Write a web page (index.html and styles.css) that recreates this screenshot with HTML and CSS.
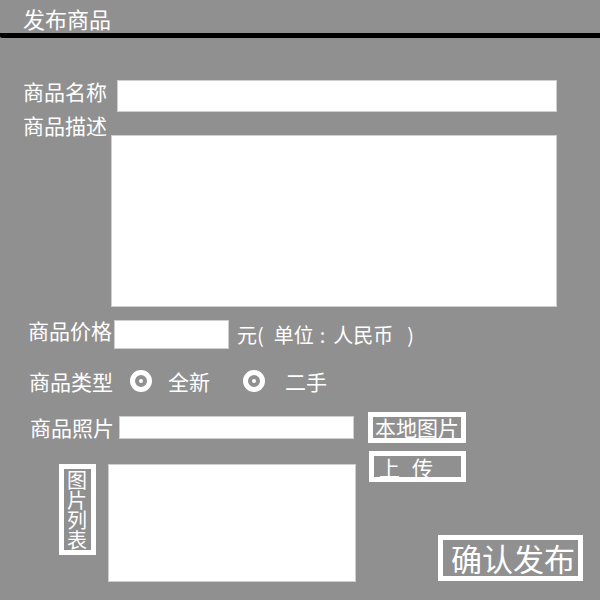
FILE: index.html
```html
<!DOCTYPE html>
<html lang="zh">
<head>
<meta charset="utf-8">
<title>发布商品</title>
<link rel="stylesheet" href="styles.css">
</head>
<body>
<div class="page">
  <div class="header"><span class="title">发布商品</span></div>

  <div class="row row-name">
    <span class="label">商品名称</span>
    <div class="input input-name"></div>
  </div>

  <div class="row row-desc">
    <span class="label">商品描述</span>
    <div class="input textarea"></div>
  </div>

  <div class="row row-price">
    <span class="label">商品价格</span>
    <div class="input input-price"></div>
    <span class="unit"><span>元(</span><span class="u-unit">单位</span><span class="u-colon">:</span><span class="u-rmb">人民币</span><span class="u-close">)</span></span>
  </div>

  <div class="row row-type">
    <span class="label">商品类型</span>
    <span class="radio radio-first"><span class="dot"></span></span>
    <span class="radio-text">全新</span>
    <span class="radio radio-second"><span class="dot"></span></span>
    <span class="radio-text radio-text-second">二手</span>
  </div>

  <div class="row row-photo">
    <span class="label">商品照片</span>
    <div class="input input-photo"></div>
    <div class="btn btn-local">本地图片</div>
  </div>

  <div class="bottom">
    <div class="list-label">图片列表</div>
    <div class="input list-box"></div>
    <div class="actions">
      <div class="btn btn-upload"><span class="up-first">上</span>传</div>
      <div class="btn btn-confirm">确认发布</div>
    </div>
  </div>
</div>
</body>
</html>
```

FILE: styles.css
```css
html, body {
  margin: 0;
  padding: 0;
  background: #909090;
}

body {
  width: 600px;
  height: 600px;
  overflow: hidden;
  font-family: "Noto Sans CJK SC", "Noto Sans", sans-serif;
  color: #ffffff;
}

.page {
  display: flex;
  flex-direction: column;
}

.header {
  height: 33px;
  border-bottom: 5px solid #000000;
  border-bottom-left-radius: 2px;
  padding-left: 23px;
  box-sizing: content-box;
}

.title {
  display: block;
  font-size: 22px;
  line-height: 22px;
  padding-top: 7px;
}

.row {
  display: flex;
  align-items: flex-start;
}

.label {
  font-size: 21px;
  line-height: 21px;
  white-space: nowrap;
}

.input {
  background: #ffffff;
  border: 1px solid #cfcfcf;
  box-sizing: border-box;
}

/* row: name */
.row-name {
  margin-top: 42px;
  padding-left: 23px;
}
.row-name .label {
  margin-top: 1px;
}
.input-name {
  margin-left: 10px;
  width: 440px;
  height: 32px;
}

/* row: description */
.row-desc {
  margin-top: 3px;
  padding-left: 23px;
}
.textarea {
  margin-left: 4px;
  margin-top: 20px;
  width: 446px;
  height: 172px;
}

/* row: price */
.row-price {
  margin-top: 13px;
  padding-left: 28px;
}
.row-price .label {
  margin-top: 0px;
}
.input-price {
  margin-left: 2px;
  width: 115px;
  height: 29px;
}
.unit {
  display: flex;
  font-size: 20px;
  line-height: 20px;
  margin-left: 8px;
  margin-top: 5px;
  white-space: nowrap;
}
.u-unit {
  margin-left: 10px;
}
.u-colon {
  margin-left: 6px;
}
.u-rmb {
  margin-left: 8px;
}
.u-close {
  margin-left: 14px;
}

/* row: type */
.row-type {
  margin-top: 21px;
  padding-left: 29px;
  align-items: center;
  height: 22px;
}
.radio {
  width: 22px;
  height: 22px;
  box-sizing: border-box;
  border: 5px solid #ffffff;
  border-radius: 50%;
  display: flex;
  align-items: center;
  justify-content: center;
}
.dot {
  width: 4px;
  height: 4px;
  border-radius: 50%;
  background: #ffffff;
}
.radio-first {
  margin-left: 17px;
}
.radio-text {
  font-size: 21px;
  line-height: 21px;
  margin-left: 16px;
}
.radio-second {
  margin-left: 33px;
}
.radio-text-second {
  margin-left: 20px;
}

/* row: photo */
.row-photo {
  margin-top: 20px;
  padding-left: 30px;
  align-items: center;
}
.input-photo {
  margin-left: 5px;
  width: 235px;
  height: 23px;
}

.btn {
  border: 5px solid #ffffff;
  background: #909090;
  color: #ffffff;
  white-space: nowrap;
  overflow: hidden;
}

.btn-local {
  margin-left: 14px;
  width: 84px;
  height: 21px;
  padding: 0 2px;
  font-size: 21px;
  line-height: 21px;
}

/* bottom area */
.bottom {
  margin-top: 8px;
  display: flex;
  align-items: flex-start;
  padding-left: 59px;
}

.list-label {
  margin-top: 13px;
  width: 20px;
  padding: 1px 4px 0 3px;
  height: 80px;
  border: 5px solid #ffffff;
  font-size: 20px;
  line-height: 20px;
  text-align: center;
  overflow: hidden;
}

.list-box {
  margin-top: 13px;
  margin-left: 12px;
  width: 248px;
  height: 118px;
}

.actions {
  margin-left: 13px;
  display: flex;
  flex-direction: column;
  align-items: flex-start;
}

.btn-upload {
  width: 82px;
  height: 21px;
  padding-left: 5px;
  padding-top: 0;
  font-size: 21px;
  line-height: 23px;
}
.up-first {
  margin-right: 12px;
}

.btn-confirm {
  margin-top: 53px;
  margin-left: 69px;
  width: 127px;
  height: 36px;
  padding-left: 8px;
  font-size: 31px;
  line-height: 36px;
}
```
